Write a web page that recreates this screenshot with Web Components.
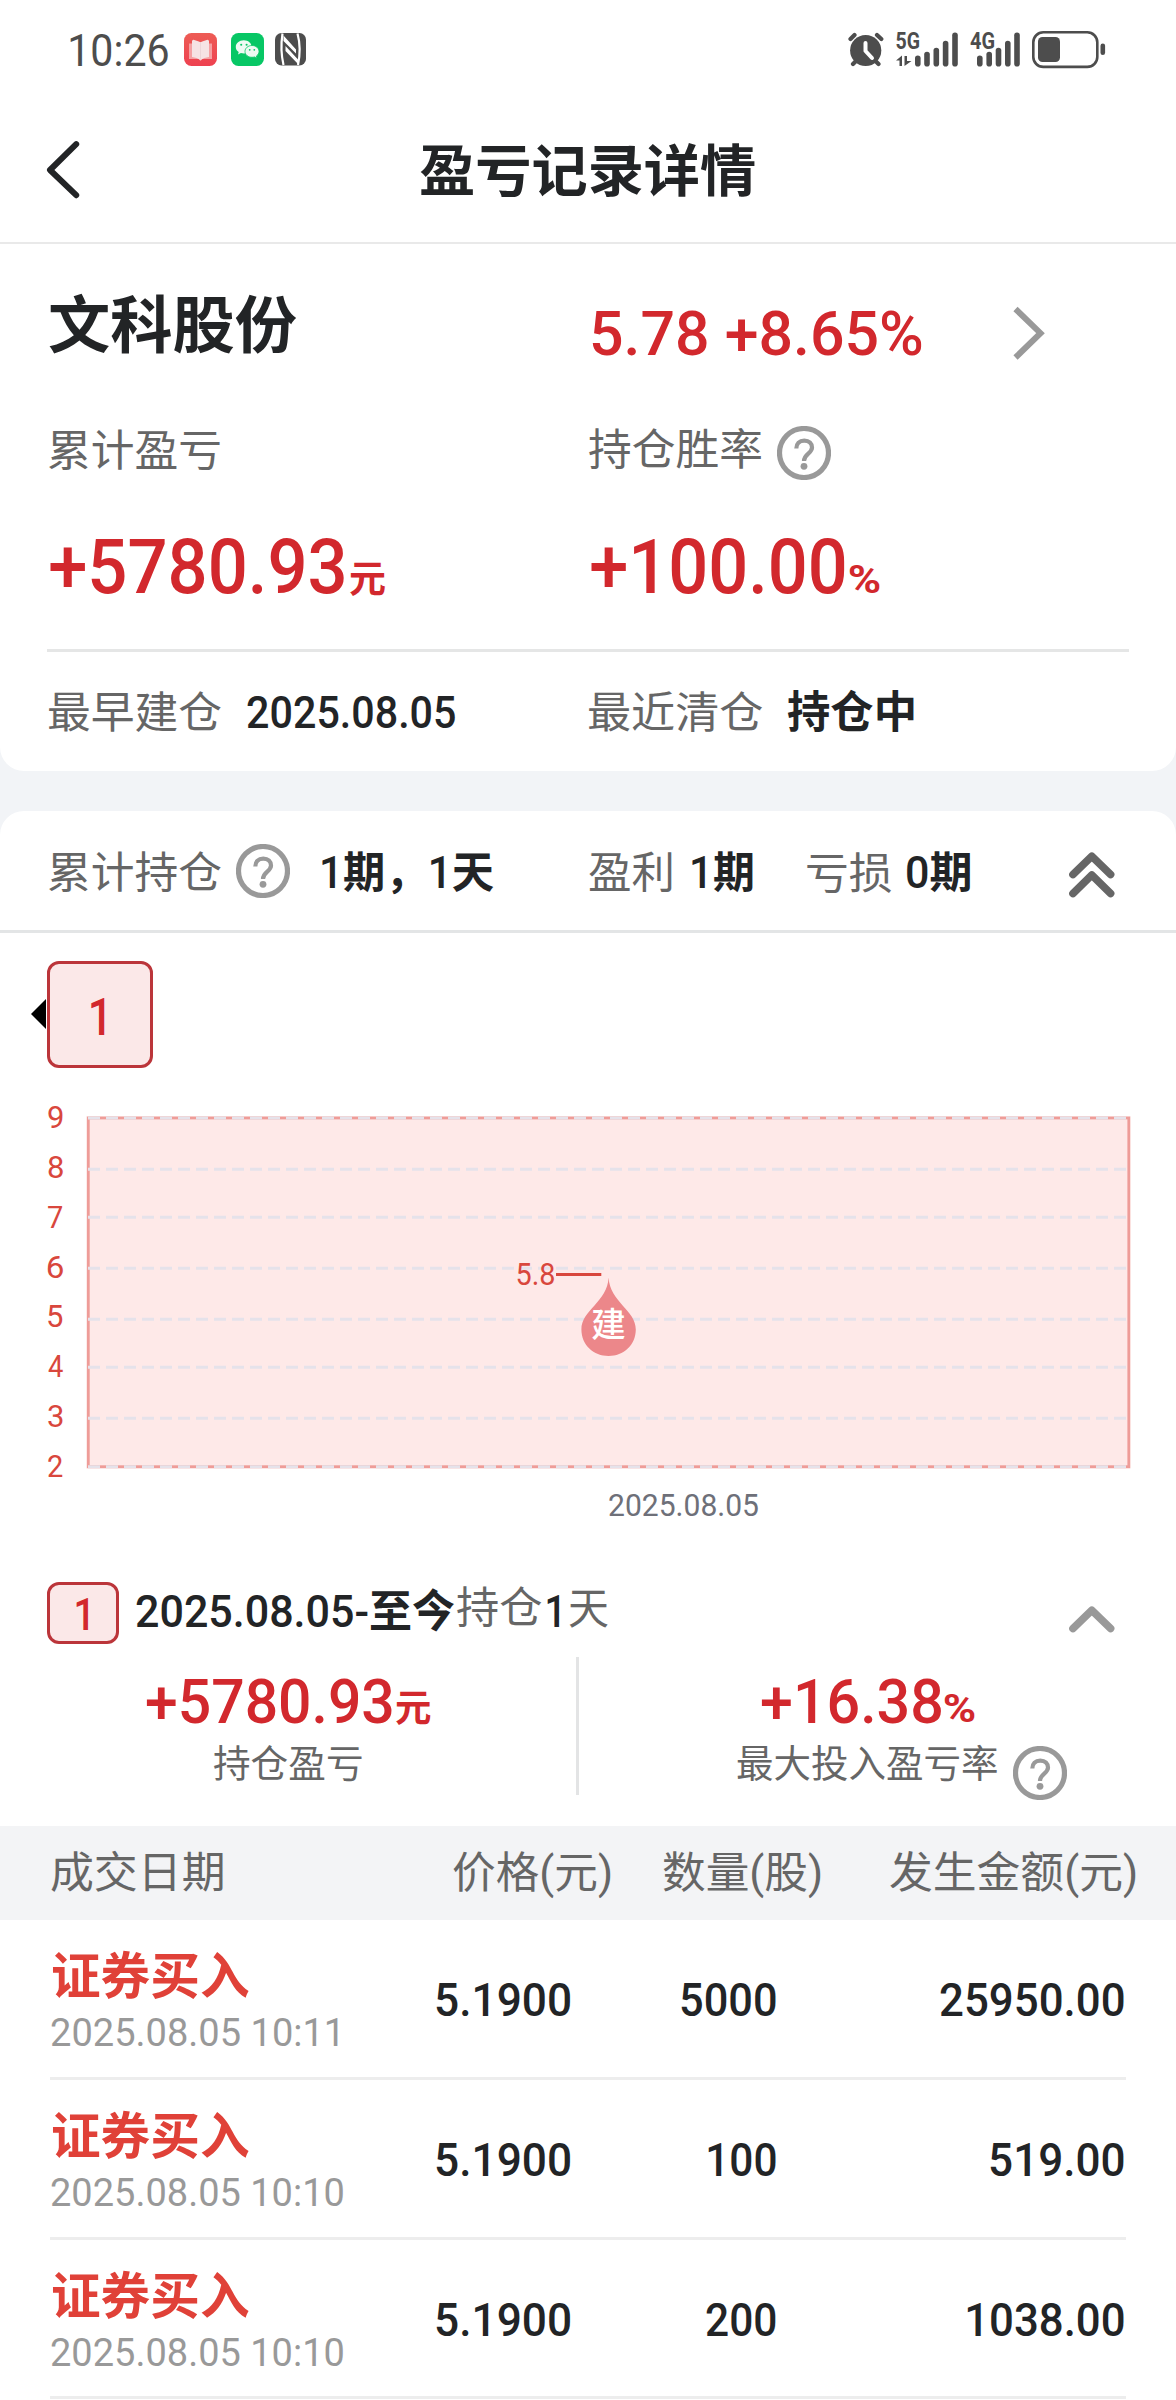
<!DOCTYPE html>
<html lang="zh-CN">
<head>
<meta charset="utf-8">
<title>盈亏记录详情</title>
<style>
html,body{margin:0;padding:0;background:#fff}
body{width:1176px;height:2400px;overflow:hidden}
</style>
</head>
<body>
<pnl-page></pnl-page>
<script>
const FONT = 'Roboto,"Noto Sans CJK SC",sans-serif';
const ctx = document.createElement('canvas').getContext('2d');

function define(name, html, setup) {
  customElements.define(name, class extends HTMLElement {
    connectedCallback() {
      if (this.shadowRoot) return;
      const root = this.attachShadow({ mode: 'open' });
      const body = typeof html === 'function' ? html(this) : html;
      root.innerHTML = '<style>:host{display:block;flex:none;box-sizing:border-box}' +
        '.row{display:flex;align-items:flex-start}</style>' + body;
      if (setup) setup(this, root);
    }
  });
}

/* Text whose visible ink fills a box: at="left-margin top-margin width height". */
define('app-text', '<style>span{display:block;white-space:nowrap;transform-origin:0 0}::slotted(b){font-weight:700}</style><span><slot></slot></span>', (el, root) => {
  const [l, t, w, h] = el.getAttribute('at').split(' ').map(Number);
  const size = el.getAttribute('size'), weight = el.getAttribute('weight') || 400;
  let adv = 0, asc = -999, desc = -999, left = null, right = 0, A = 0, D = 0;
  for (const n of el.childNodes) {
    ctx.font = `${n.nodeName === 'B' ? 700 : weight} ${size}px ${FONT}`;
    const m = ctx.measureText(n.textContent);
    if (left === null) { left = -m.actualBoundingBoxLeft; A = m.fontBoundingBoxAscent; D = m.fontBoundingBoxDescent; }
    right = adv + m.actualBoundingBoxRight;
    asc = Math.max(asc, m.actualBoundingBoxAscent);
    desc = Math.max(desc, m.actualBoundingBoxDescent);
    adv += m.width;
  }
  const sx = w / (right - left);
  const base = h / 2 + (A - D) / 2;
  const dy = h / 2 - (base + (desc - asc) / 2);
  el.style.cssText += `;margin:${t}px 0 0 ${l}px;width:${w}px;height:${h}px`;
  const s = root.querySelector('span');
  s.style.cssText = `font:${weight} ${size}px/${h}px ${FONT};width:max-content;transform:translate(${-left * sx}px,${dy}px) scaleX(${sx})`;
});

define('help-icon', `<style>:host{width:54px;height:54px}svg{display:block}</style>
<svg width="54" height="54" viewBox="0 0 54 54" fill="none" stroke="#999" stroke-linecap="butt">
<circle cx="27" cy="27" r="24.5" stroke-width="5.2"/>
<path d="M19.3 22.5C19.3 17.6 22.4 14.6 27.3 14.6S35 17.5 35 21.6C35 27.6 27 27.8 27 35" stroke-width="4.2"/>
<circle cx="27" cy="40.3" r="3.4" fill="#999" stroke="none"/></svg>`);

define('fold-icon', el => {
  const dbl = el.hasAttribute('double');
  return `<style>:host{width:46px}svg{display:block}</style>
<svg width="46" height="${dbl ? 46 : 27}" viewBox="0 0 46 ${dbl ? 46 : 27}" fill="none" stroke="${dbl ? '#666' : '#999'}" stroke-width="7.6" stroke-linecap="round" stroke-linejoin="round">
<path d="M4 22.500L22.800 4.200L41.600 22.500"/>${dbl ? '<path d="M4 41.500L22.800 23L41.600 41.500"/>' : ''}</svg>`;
});

define('index-badge', `<style>:host{border:3px solid #bb353a;background:#fbe8e8;color:#d2282d}</style><slot></slot>`);

define('status-bar', `<style>:host{height:96px;color:#4d4d4d}svg{display:block}.row{height:96px}</style>
<div class="row">
<app-text at="69.5 34 98.5 32.5" size="45">10:26</app-text>
<svg style="margin:33px 0 0 16px" width="33" height="33" viewBox="0 0 33 33"><defs><linearGradient id="g" x2="0" y2="1"><stop stop-color="#ed5c55"/><stop offset="1" stop-color="#ee4150"/></linearGradient></defs><rect width="33" height="33" rx="7.5" fill="url(#g)"/><path d="M5 10.5h23v15.5H18.2L16.5 28l-1.700-2H5z" fill="#f5a0a2"/><path d="M8 8Q9 6 11 7.300Q14.500 8.300 16.500 9.200Q18.500 8.300 22 7.300Q24 6 25 8V24Q20 24.300 16.500 27Q13 24.300 8 24z" fill="#f6e3e4"/><path d="M16.500 9V26.500" stroke="#ead2d4" stroke-width=".8"/></svg>
<svg style="margin:33px 0 0 14px" width="33" height="33" viewBox="0 0 33 33"><rect width="33" height="33" rx="7.500" fill="#07c765"/><path d="M12.800 7.300c-4.600 0-8 3-8 6.600 0 2.100 1.100 3.900 2.900 5.100L7 21.400l2.900-1.400c1 .3 2 .4 3.100.4 4.400 0 7.600-3 7.600-6.600s-3.400-6.500-7.800-6.500z" fill="#eefaf3"/><path d="M21 12.500c-3.900 0-7 2.600-7 5.900s3.100 5.900 7 5.900c.9 0 1.700-.1 2.500-.4l2.500 1.300-.6-2.200c1.600-1.100 2.600-2.700 2.600-4.600 0-3.300-3.100-5.900-7-5.900z" fill="#eefaf3" stroke="#07c765" stroke-width=".8"/><g fill="#07c765"><circle cx="10.200" cy="11.800" r="1.050"/><circle cx="15.600" cy="11.800" r="1.050"/><circle cx="18.700" cy="16.800" r=".9"/><circle cx="23.300" cy="16.800" r=".9"/></g></svg>
<svg style="margin:33px 0 0 11px" width="31" height="33" viewBox="0 0 31 33"><rect width="31" height="32.500" rx="6.500" fill="#4d4d4d"/><path d="M7.500 0.500Q5 17 8.500 32" fill="none" stroke="#fff" stroke-width="2.200"/><path d="M22.500 0.500Q26.500 15 23 32" fill="none" stroke="#fff" stroke-width="2.200"/><path d="M8.500 2.500L21 16.500V20.500L8.500 8z M10.500 13L23 26.500V31L10.500 18z" fill="#fff"/></svg>
<svg style="margin:32px 0 0 542px" width="36" height="35" viewBox="0 0 36 35"><g fill="none" stroke="#4d4d4d" stroke-width="4.200" stroke-linecap="round"><path d="M2.500 7L6.500 3M29 3l4.300 4M7.500 29.500L5 32M28 29.500l2.500 2.500"/></g><circle cx="17.700" cy="18.500" r="15.600" fill="#4d4d4d"/><path d="M17.500 11v8l6.500 7" fill="none" stroke="#fff" stroke-width="4" stroke-linecap="round" stroke-linejoin="round"/></svg>
<svg style="margin:21px 0 0 11px" width="64" height="48" viewBox="895 21 64 48" fill="#4d4d4d"><text x="895.500" y="49.200" font-family="Roboto" font-weight="700" font-size="23" textLength="24.500" lengthAdjust="spacingAndGlyphs">5G</text><path d="M896 60.500L902 55.500V66H899.500V60.500zM904.500 56H907V61H911.500L904.500 66z"/><g><rect x="915" y="55.500" width="5.600" height="11" rx="2.800"/><rect x="924.200" y="51.700" width="5.600" height="14.800" rx="2.800"/><rect x="933.500" y="47.700" width="5.600" height="18.800" rx="2.800"/><rect x="942.800" y="40.700" width="5.600" height="25.800" rx="2.800"/><rect x="952.200" y="32.500" width="5.600" height="34" rx="2.800"/></g></svg>
<svg style="margin:21px 0 0 9px" width="54" height="48" viewBox="968 21 54 48" fill="#4d4d4d"><text x="970" y="49.200" font-family="Roboto" font-weight="700" font-size="23" textLength="25" lengthAdjust="spacingAndGlyphs">4G</text><g><rect x="977" y="55.500" width="5.600" height="11" rx="2.800"/><rect x="986.400" y="51.700" width="5.600" height="14.800" rx="2.800"/><rect x="995.700" y="47.700" width="5.600" height="18.800" rx="2.800"/><rect x="1005" y="40.700" width="5.600" height="25.800" rx="2.800"/><rect x="1014.200" y="32.500" width="5.600" height="34" rx="2.800"/></g></svg>
<svg style="margin:31px 0 0 10px" width="74" height="38" viewBox="0 0 74 38"><rect x="1.300" y="1.300" width="64" height="34.600" rx="10" fill="none" stroke="#4d4d4d" stroke-width="2.600"/><rect x="6" y="6" width="22" height="25" rx="4.500" fill="#4d4d4d"/><rect x="68.500" y="12.500" width="4.600" height="11.500" rx="2.300" fill="#4d4d4d"/></svg>
</div>`);

define('nav-bar', `<style>:host{height:148px;border-bottom:2px solid #e9e9e9;color:#222426}svg{display:block;margin:44px 0 0 45px}</style>
<div class="row"><svg width="38" height="60" viewBox="0 0 38 60" fill="none" stroke="#222426" stroke-width="6" stroke-linecap="round" stroke-linejoin="round"><path d="M31.200 4.200L5 30L31.200 55.200"/></svg>
<app-text at="336.700 48 335.300 52" size="56" weight="700">盈亏记录详情</app-text></div>`);

define('stock-summary', `<style>:host{background:#fff;height:527px;border-radius:0 0 24px 24px;color:#666}.k{color:#222426}.r{color:#d2282d}.div{height:3px;background:#e5e6e6;margin:0 47px}svg{display:block;margin:62px 0 0 90px}</style>
<div class="row" style="height:156px"><app-text class="k" at="48.500 51 248 58" size="62" weight="700">文科股份</app-text><app-text class="r" at="295.500 67 330 44" size="61" weight="500">5.78 +8.65%</app-text>
<svg width="34" height="54" viewBox="0 0 34 54" fill="none" stroke="#999" stroke-width="6"><path d="M3.500 3L28.500 27.200L3.500 51.500"/></svg></div>
<div class="row" style="height:110px"><app-text at="48.500 29.500 171.500 40" size="43.500">累计盈亏</app-text><app-text at="369 29 172.500 40.500" size="43.500">持仓胜率</app-text><help-icon style="margin:26px 0 0 15.500px"></help-icon></div>
<div class="row r" style="height:139px"><app-text at="50 28.500 294 54" size="75.500" weight="500">+5780.93</app-text><app-text at="5.600 52.500 35 33" size="38" weight="700">元</app-text><app-text at="206.400 28.500 254 54" size="75.500" weight="500">+100.00</app-text><app-text at="4.500 54.500 31 28" size="38" weight="700">%</app-text></div>
<div class="div"></div>
<div class="row" style="height:119px"><app-text at="49 38.500 172.500 41" size="43.500">最早建仓</app-text><app-text class="k" at="25 44 208 32.500" size="45" weight="500">2025.08.05</app-text><app-text at="134.500 38.500 174 41" size="43.500">最近清仓</app-text><app-text class="k" at="24 38.500 127 41" size="44" weight="700">持仓中</app-text></div>`);

define('holding-bar', `<style>:host{background:#fff;height:122px;border-radius:24px 24px 0 0;border-bottom:3px solid #e3e5e6;color:#666}.k{color:#222426}</style>
<div class="row"><app-text at="49 39.500 172.500 41" size="43.500">累计持仓</app-text><help-icon style="margin:33px 0 0 14.500px"></help-icon>
<app-text class="k" at="31.500 39 171.500 45" size="43.500" weight="500">1<b>期，</b>1<b>天</b></app-text><app-text at="96 40.500 82.500 40" size="43.500">盈利</app-text><app-text class="k" at="20.500 40.500 60.500 40" size="43.500" weight="500">1<b>期</b></app-text><app-text at="54 41.500 84 39" size="43.500">亏损</app-text><app-text class="k" at="16 40.500 63 40" size="43.500" weight="500">0<b>期</b></app-text><fold-icon double style="margin:41px 0 0 99px"></fold-icon></div>`);

define('period-tabs', `<style>:host{height:157px}svg{display:block;margin:66px 0 0 31px}index-badge{width:106px;height:107px;margin:28px 0 0 1px;border-radius:12px}</style>
<div class="row"><svg width="15" height="30" viewBox="0 0 15 30"><path d="M0 15L15 0V30z"/></svg><index-badge><app-text at="41 34 13.500 37" size="52" weight="500">1</app-text></index-badge></div>`);

define('pnl-chart', () => {
  const ys = [1118, 1169.3, 1217.3, 1268.3, 1319.3, 1367.3, 1418.3, 1466.700];
  const labels = [9, 8, 7, 6, 5, 4, 3, 2].map((n, i) => `<app-text at="48 ${i ? 27.860 : 16} 15 22" size="31">${n}</app-text>`).join('');
  const lines = ys.map(y => `<path d="M88 ${y}H1127.500"/>`).join('');
  return `<style>:host{height:440px;color:#d9473d}svg{display:block}</style><div class="row"><div>${labels}</div>
<svg width="1113" height="440" viewBox="63 1090 1113 440" font-family='${FONT}'>
<rect x="86.500" y="1116" width="1044" height="352.800" fill="#fee9e8"/>
<rect x="88.300" y="1118" width="1040.500" height="348.700" fill="none" stroke="#ee9c98" stroke-width="2.800"/>
<g stroke="#e5e2ea" stroke-width="3" stroke-dasharray="12 6">${lines}</g>
<text x="515.500" y="1285" font-size="31" fill="#d9473d" textLength="40" lengthAdjust="spacingAndGlyphs">5.8</text>
<path d="M556 1274.500H601.300" stroke="#d9473d" stroke-width="3"/>
<path d="M608.600 1277.500C609.800 1302 635.800 1310 635.800 1329.500C635.800 1345 623.600 1356 608.600 1356S581.400 1345 581.400 1329.500C581.400 1310 607.400 1302 608.600 1277.500z" fill="#ec878a"/>
<text x="608.600" y="1337" font-size="34.500" fill="#fff" font-weight="500" text-anchor="middle">建</text>
<text x="608" y="1515.500" font-size="31" fill="#6e7079" textLength="151" lengthAdjust="spacingAndGlyphs">2025.08.05</text>
</svg></div>`;
});

define('period-card', `<style>:host{height:296px;color:#666}.k{color:#222426}.r{color:#d2282d}index-badge{width:72px;height:62px;margin:52px 0 0 47px;border-radius:12px}.vr{width:3px;height:138px;margin-top:7px;background:#e3e4e5}</style>
<div class="row" style="height:120px"><index-badge><app-text at="25.500 13 12 32" size="45" weight="500">1</app-text></index-badge><app-text class="k" at="17 60 318 40" size="44" weight="500">2025.08.05-<b>至今</b></app-text><app-text at="3 55.500 85 41" size="43.500">持仓</app-text><app-text class="k" at="5 65 12 32" size="45" weight="500">1</app-text><app-text at="10 59.500 39.500 37" size="43.500">天</app-text><fold-icon style="margin:75.500px 0 0 460.500px"></fold-icon></div>
<div class="row"><div style="width:576px"><div class="row r" style="height:96px"><app-text at="146 28.500 246 44" size="61.500" weight="500">+5780.93</app-text><app-text at="4 42 34.500 33" size="38" weight="700">元</app-text></div><app-text at="214 0 148 35" size="37.500">持仓盈亏</app-text></div>
<div class="vr"></div>
<div><div class="row r" style="height:96px"><app-text at="182 28.500 180 44" size="61.500" weight="500">+16.38</app-text><app-text at="3 44 31 28" size="38" weight="700">%</app-text></div><div class="row"><app-text at="158 0 260 35" size="37.500">最大投入盈亏率</app-text><help-icon style="margin:0 0 0 15.500px"></help-icon></div></div></div>`);

define('trade-head', `<style>:host{height:94px;background:#f3f4f6;color:#666}</style>
<div class="row"><app-text at="51 25 172 40.500" size="43.500">成交日期</app-text><app-text at="229.500 27.500 158 41.500" size="43.500">价格(元)</app-text><app-text at="52.500 27.500 158 41.500" size="43.500">数量(股)</app-text><app-text at="69 27.500 246 41.500" size="43.500">发生金额(元)</app-text></div>`);

define('trade-row', el => {
  const a = n => el.getAttribute(n);
  return `<style>:host{display:grid;grid-template-columns:386.500px 133.500px 205.500px 348px 2.500px;height:160px;margin:0 50px;border-bottom:3px solid #ededed;color:#222426;align-items:start;justify-items:end}div{justify-self:start}.t{color:#e04138}.d{color:#999}</style>
<div><app-text class="t" at="2 31 197 46" size="49.500" weight="700">证券买入</app-text><app-text class="d" at="1 21 ${a('dw')} 28" size="39">${a('date')}</app-text></div>
<app-text at="0 63 134 33" size="46" weight="500">${a('price')}</app-text><app-text at="0 63 ${a('qw')} 33" size="46" weight="500">${a('qty')}</app-text><app-text at="0 63 ${a('aw')} 33" size="46" weight="500">${a('amount')}</app-text>`;
});

define('pnl-page', `<style>:host{width:1176px;height:2400px;overflow:hidden;background:#fff}.cards{background:#f2f4f7;display:flex;flex-direction:column;gap:40px}</style>
<status-bar></status-bar><nav-bar></nav-bar>
<div class="cards"><stock-summary></stock-summary><holding-bar></holding-bar></div>
<period-tabs></period-tabs><pnl-chart></pnl-chart><period-card></period-card><trade-head></trade-head>
<trade-row date="2025.08.05 10:11" dw="286.500" price="5.1900" qty="5000" qw="94.500" amount="25950.00" aw="183.500"></trade-row>
<trade-row date="2025.08.05 10:10" dw="292" price="5.1900" qty="100" qw="67.500" amount="519.00" aw="133.500"></trade-row>
<trade-row style="height:159px" date="2025.08.05 10:10" dw="292" price="5.1900" qty="200" qw="69.500" amount="1038.00" aw="156.500"></trade-row>`);
</script>
</body>
</html>
